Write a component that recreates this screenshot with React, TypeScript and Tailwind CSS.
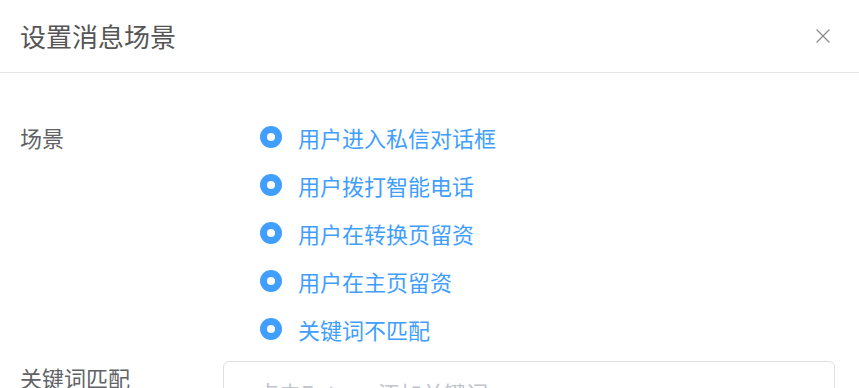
import { X } from 'lucide-react';

const scenes = [
  "用户进入私信对话框",
  "用户拨打智能电话",
  "用户在转换页留资",
  "用户在主页留资",
  "关键词不匹配",
];

export default function App() {
  return (
    <div
      className="w-[859px] h-[388px] overflow-hidden bg-white"
      style={{ fontFamily: '"Noto Sans CJK SC", "Noto Sans", sans-serif' }}
    >
      {/* Header */}
      <div className="h-[73px] border-b border-[#e4e4e4] flex items-center justify-between pl-5 pr-[24px]">
        <h2 className="text-[26px] text-[#555] leading-none">设置消息场景</h2>
        <X className="w-6 h-6 text-[#8a8a8a]" strokeWidth={1.3} />
      </div>

      {/* Body */}
      <div className="pt-10 pl-5 pr-6">
        <div className="flex">
          <div className="w-[203px] h-12 flex items-center text-[22px] text-[#606266] shrink-0">场景</div>
          <div className="flex flex-col pl-[37px]">
            {scenes.map((s) => (
              <label key={s} className="h-12 flex items-center gap-4">
                <span className="w-[22px] h-[22px] rounded-full bg-[#409eff] flex items-center justify-center">
                  <span className="w-2 h-2 rounded-full bg-white" />
                </span>
                <span className="text-[22px] text-[#409eff]">{s}</span>
              </label>
            ))}
          </div>
        </div>

        <div className="flex mt-2">
          <div className="w-[203px] shrink-0 pt-[2px] text-[22px] text-[#606266] leading-[28px]">关键词匹配</div>
          <div className="flex-1 h-[120px] border border-[#dcdfe6] rounded-md px-[33px] pt-[14px] text-[22px] text-[#c0c4cc]">
            点击Enter，添加关键词
          </div>
        </div>
      </div>
    </div>
  );
}
